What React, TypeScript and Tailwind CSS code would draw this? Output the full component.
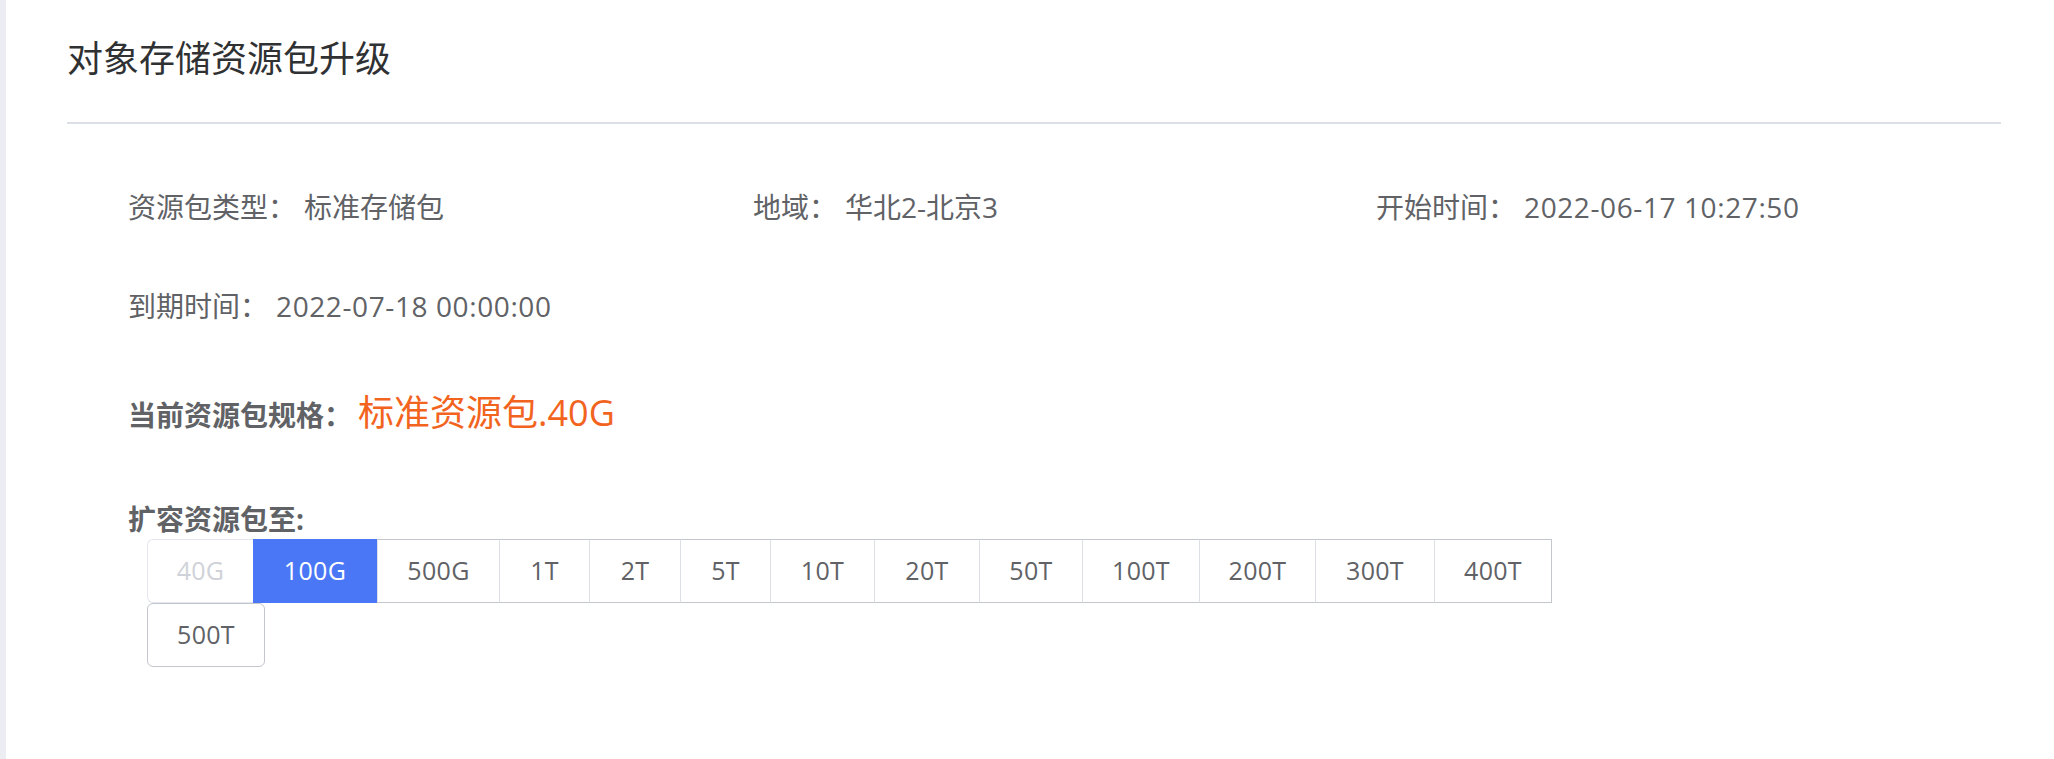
import React from 'react';

type Spec = { label: string; w: string; disabled?: boolean; active?: boolean };

const specs: Spec[] = [
  { label: '40G', w: 'w-[106px]', disabled: true },
  { label: '100G', w: 'w-[124px]', active: true },
  { label: '500G', w: 'w-[122px]' },
  { label: '1T', w: 'w-[90px]' },
  { label: '2T', w: 'w-[91px]' },
  { label: '5T', w: 'w-[90px]' },
  { label: '10T', w: 'w-[104px]' },
  { label: '20T', w: 'w-[105px]' },
  { label: '50T', w: 'w-[103px]' },
  { label: '100T', w: 'w-[117px]' },
  { label: '200T', w: 'w-[116px]' },
  { label: '300T', w: 'w-[119px]' },
  { label: '400T', w: 'w-[118px]' },
];

const InfoItem: React.FC<{ label: string; value: string; wide?: boolean }> = ({ label, value, wide }) => (
  <div className="flex items-center">
    <span>{label}</span>
    <span className={wide ? 'ml-[8px] tracking-[0.6px]' : 'ml-[8px]'}>{value}</span>
  </div>
);

const SpecButton: React.FC<{ spec: Spec; first?: boolean; last?: boolean }> = ({ spec, first, last }) => {
  let cls = `flex h-[64px] shrink-0 items-center justify-center text-[25px] tracking-[0.3px] border-y ${spec.w}`;
  if (spec.disabled) {
    cls += ' border-[#e4e7ed] text-[#cfd2d8] bg-white';
  } else if (spec.active) {
    cls += ' border-[#4a77f5] bg-[#4a77f5] text-white';
  } else {
    cls += ' border-y-[#c3c6cc] border-l border-l-[#dcdfe6] bg-white text-[#606266]';
  }
  if (first) cls += ' border-l rounded-l-[6px]';
  if (last) cls += ' border-r border-r-[#c3c6cc]';
  return <div className={cls}>{spec.label}</div>;
};

export default function App() {
  return (
    <div className="flex min-h-[759px] bg-[#ebedf3] font-['Open_Sans','Noto_Sans_CJK_SC',sans-serif]">
      <div className="ml-[6px] flex-1 bg-white pl-[61px] pr-[53px]">
        <div className="flex h-[124px] items-center pb-[4px] border-b-2 border-[#dcdfe6]">
          <h1 className="text-[36px] leading-none text-[#303133]">对象存储资源包升级</h1>
        </div>

        <div className="pl-[61px] pt-[62px] text-[28px] text-[#606266]">
          <div className="grid h-[40px] grid-cols-[625px_623px_auto] items-center">
            <InfoItem label="资源包类型：" value="标准存储包" />
            <InfoItem label="地域：" value="华北2-北京3" />
            <InfoItem label="开始时间：" value="2022-06-17 10:27:50" wide />
          </div>
          <div className="mt-[60px] flex h-[40px] items-center">
            <InfoItem label="到期时间：" value="2022-07-18 00:00:00" wide />
          </div>

          <div className="mt-[67px] flex h-[40px] items-baseline">
            <span className="font-bold">当前资源包规格：</span>
            <span className="ml-[6px] text-[36px] leading-[40px] text-[#f2641e]">标准资源包.40G</span>
          </div>

          <div className="mt-[68px] flex h-[36px] items-center">
            <span className="font-bold">扩容资源包至:</span>
          </div>

          <div className="ml-[19px] mt-[2px] flex w-[1420px] flex-wrap">
            {specs.map((s, i) => (
              <SpecButton key={s.label} spec={s} first={i === 0} last={i === specs.length - 1} />
            ))}
            <div className="flex h-[64px] w-[118px] items-center justify-center rounded-[6px] border border-[#c3c6cc] bg-white text-[25px] tracking-[0.3px] text-[#606266]">
              500T
            </div>
          </div>
        </div>
      </div>
    </div>
  );
}
